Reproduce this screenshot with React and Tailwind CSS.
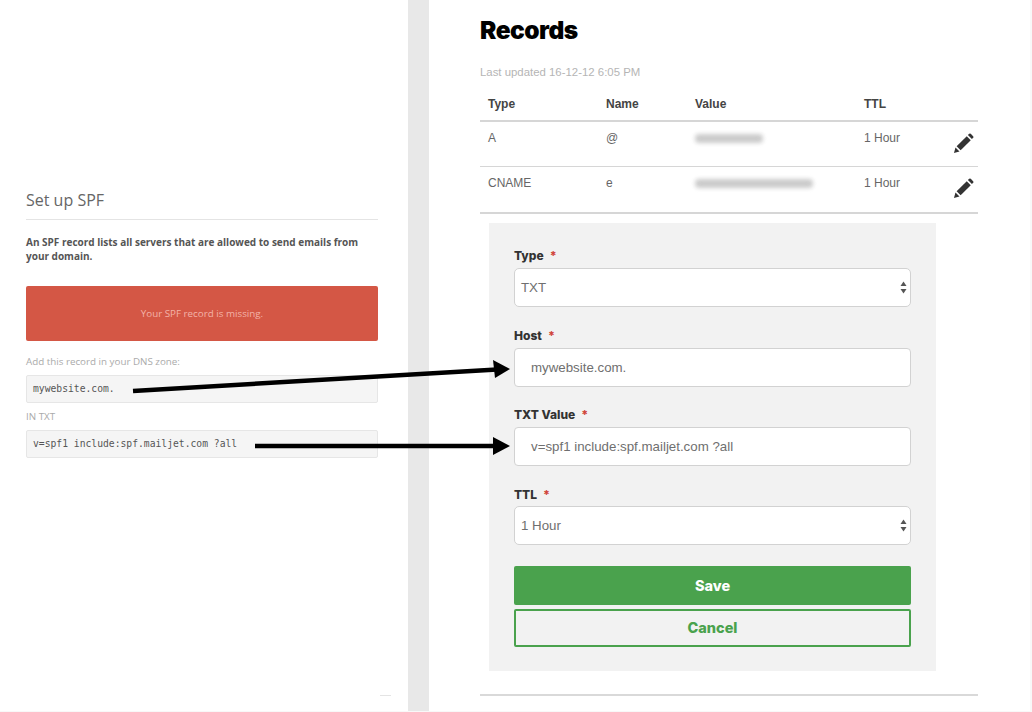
const sans = "font-['Liberation_Sans',Arial,sans-serif]";
const heavy = "font-['Inter',sans-serif]";

function Sorter() {
  return (
    <svg width="7" height="13" viewBox="0 0 7 13" className="shrink-0">
      <path d="M3.5 0.5 L6.5 5 H0.5 Z" fill="#555" />
      <path d="M3.5 12.5 L6.5 8 H0.5 Z" fill="#555" />
    </svg>
  );
}

function EditIcon() {
  return (
    <svg width="21" height="21" viewBox="0 0 22 22" className="absolute right-[4px] top-[11px]">
      <path d="M1 21 L2.6 15.2 L6.8 19.4 Z" fill="#333" />
      <path d="M3.8 14 L14.4 3.4 L18.6 7.6 L8 18.2 Z" fill="#333" />
      <path d="M15.6 2.2 L17 0.8 Q17.8 0.2 18.6 0.9 L21.1 3.4 Q21.8 4.2 21.2 5 L19.8 6.4 Z" fill="#333" />
    </svg>
  );
}

function Blurred({ w }) {
  return <div className={`mt-[3px] h-[9px] rounded-sm bg-[#a9a9a9] opacity-60 blur-[2px] ${w}`} />;
}

function Label({ children, className = "" }) {
  return (
    <div className={`flex h-[13px] items-center ${heavy} text-[12px] font-extrabold text-[#333] ${className}`}>
      {children}
      <span className="ml-[6px] text-[12px] leading-none text-[#d0453a]">*</span>
    </div>
  );
}

function Field({ children, rounded = "rounded-[4px]", pad = "px-[16px]", mt = "mt-[6px]" }) {
  return (
    <div className={`${mt} flex h-[39px] items-center justify-between border border-[#d2d2d2] bg-white ${pad} ${rounded} ${sans} text-[13.3px] text-[#6f6f6f]`}>
      {children}
    </div>
  );
}

function Row({ type, name, blur, h, line = "border-b border-[#d6d6d6]" }) {
  return (
    <div className={`relative flex ${h} ${line} pl-2 pt-[9px] text-[12px] leading-[14px] text-[#666]`}>
      <div className="w-[118px]">{type}</div>
      <div className="w-[89px]">{name}</div>
      <div className="w-[169px]"><Blurred w={blur} /></div>
      <div>1 Hour</div>
      <EditIcon />
    </div>
  );
}

export default function App() {
  return (
    <div className={`relative flex h-[712px] w-[1032px] overflow-hidden border-r-2 border-b border-[#f8f8f8] bg-white ${sans}`}>
      {/* left: mailjet panel */}
      <div className="relative w-[408px] shrink-0 pl-[26px] pr-[30px] pt-[190px] font-['Open_Sans',sans-serif]">
        <h2 className="border-b border-[#e4e4e4] pb-[8px] text-[16px] leading-[21px] text-[#666]">Set up SPF</h2>
        <p className="mt-[15px] text-[10px] font-bold leading-[14px] text-[#555]">
          An SPF record lists all servers that are allowed to send emails from your domain.
        </p>
        <div className="mt-[23px] flex h-[55px] items-center justify-center rounded-[2px] bg-[#d45745] pt-[1px] text-[9.8px] text-[#f3b3a8]">
          Your SPF record is missing.
        </div>
        <div className="mt-[14px] text-[9.8px] leading-[14px] text-[#aaa]">Add this record in your DNS zone:</div>
        <div className="mt-[6px] flex h-[28px] items-center rounded-[2px] border border-[#e6e6e6] bg-[#f5f5f5] px-[6px] font-['DejaVu_Sans_Mono',monospace] text-[9.7px] text-[#555]">
          mywebsite.com.
        </div>
        <div className="mt-[7px] text-[9.8px] leading-[14px] text-[#aaa]">IN TXT</div>
        <div className="mt-[6px] flex h-[28px] items-center rounded-[2px] border border-[#e6e6e6] bg-[#f5f5f5] px-[6px] font-['DejaVu_Sans_Mono',monospace] text-[9.7px] text-[#555]">
          v=spf1 include:spf.mailjet.com ?all
        </div>
        <div className="absolute bottom-[15px] right-[17px] h-px w-[11px] bg-[#e4e4e4]" />
      </div>

      <div className="w-[21px] shrink-0 bg-[#e8e8e8]" />

      {/* right: dns records */}
      <div className="flex-1 pl-[51px] pr-[52px] pt-[15px]">
        <h1 className={`${heavy} text-[24.5px] font-black leading-[30px] tracking-[-0.5px] text-black`}>Records</h1>
        <div className="mt-[20px] text-[11.4px] leading-[14px] text-[#b5b5b5]">Last updated 16-12-12 6:05 PM</div>

        <div className="mt-[18px] flex h-[25px] border-b-2 border-[#d6d6d6] pl-2 text-[12px] font-bold leading-[14px] text-[#444]">
          <div className="w-[118px]">Type</div>
          <div className="w-[89px]">Name</div>
          <div className="w-[169px]">Value</div>
          <div>TTL</div>
        </div>
        <Row type="A" name="@" blur="w-[68px]" h="h-[45px]" />
        <Row type="CNAME" name="e" blur="w-[118px]" h="h-[47px]" line="border-b-2 border-[#d6d6d6]" />

        <div className="ml-[9px] mt-[9px] h-[448px] w-[447px] bg-[#f2f2f2] px-[25px] pt-[26px]">
          <Label>Type</Label>
          <Field pad="pl-[6px] pr-[3px]" rounded="rounded-[5px]">TXT<Sorter /></Field>
          <Label className="mt-[22px]">Host</Label>
          <Field>mywebsite.com.</Field>
          <Label className="mt-[21px]">TXT Value</Label>
          <Field>v=spf1 include:spf.mailjet.com ?all</Field>
          <Label className="mt-[22px]">TTL</Label>
          <Field pad="pl-[6px] pr-[3px]" rounded="rounded-[5px]" mt="mt-[5px]">1 Hour<Sorter /></Field>
          <button className={`mt-[21px] block h-[39px] w-full rounded-[2px] bg-[#4aa24d] ${heavy} text-[14.5px] font-extrabold text-white`}>
            Save
          </button>
          <button className={`mt-[4px] block h-[38px] w-full rounded-[2px] border-2 border-[#4aa24d] ${heavy} text-[14.5px] font-extrabold text-[#4aa24d]`}>
            Cancel
          </button>
        </div>
        <div className="mt-[23px] border-t-2 border-[#d9d9d9]" />
      </div>

      {/* annotation arrows over both panels */}
      <svg width="1032" height="712" className="pointer-events-none absolute left-0 top-0">
        <path d="M133 391 L497 369.5" stroke="#000" strokeWidth="4.5" fill="none" />
        <path d="M493 360 L510 369 L495 378 Z" fill="#000" />
        <path d="M255 446 L497 446" stroke="#000" strokeWidth="4.5" fill="none" />
        <path d="M493 437 L510 446 L493 455 Z" fill="#000" />
      </svg>
    </div>
  );
}
